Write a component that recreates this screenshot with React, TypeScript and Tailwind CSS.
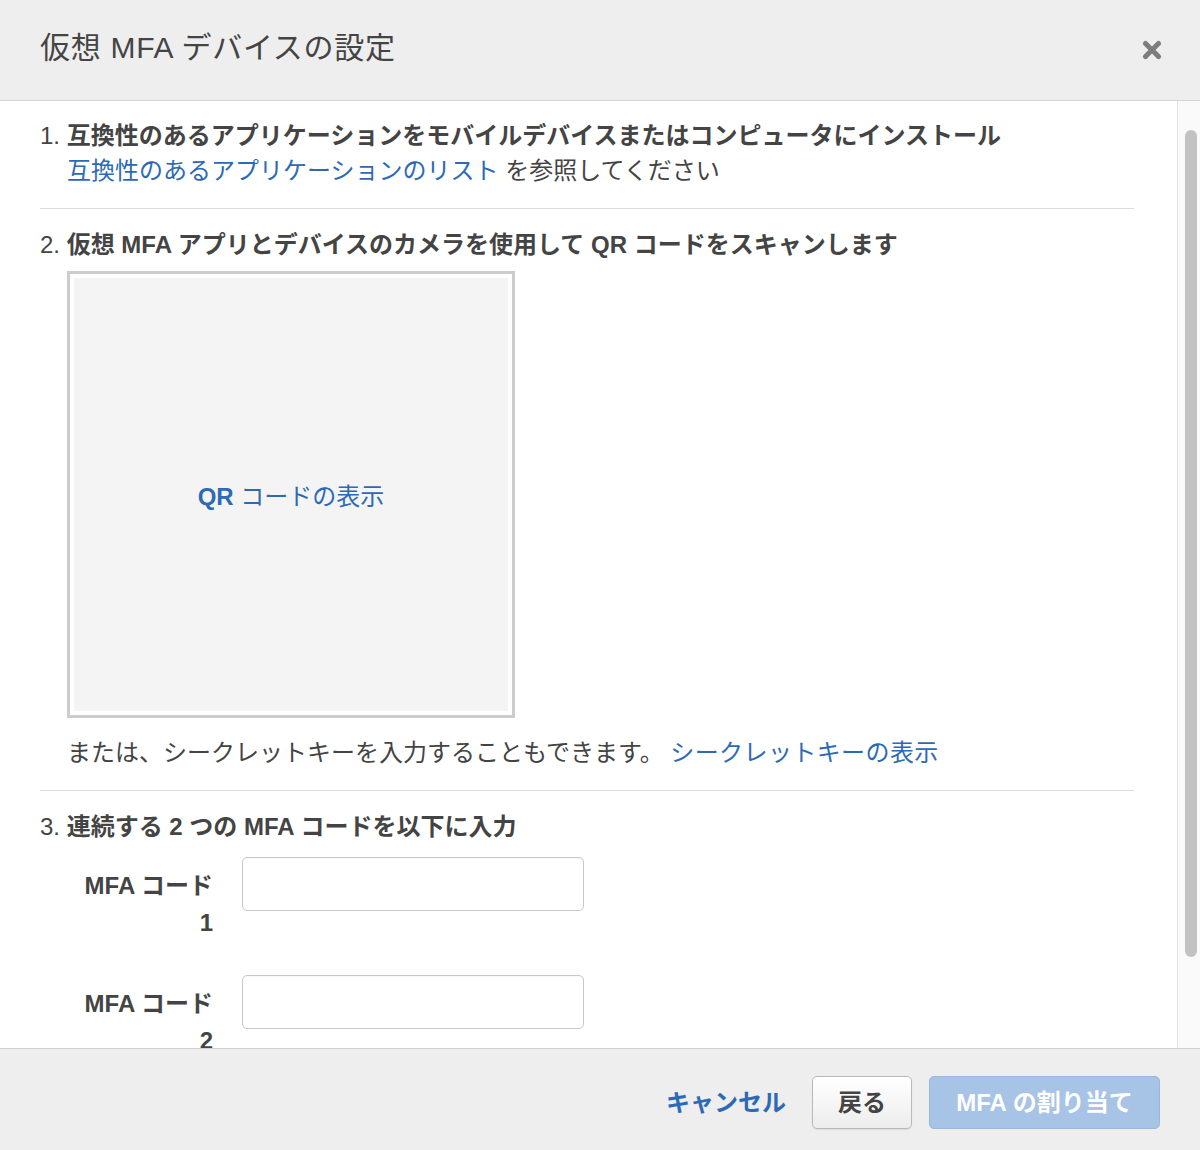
import React from "react";

const FONT = { fontFamily: '"Liberation Sans", "Noto Sans CJK JP", sans-serif' };

function CloseIcon() {
  return (
    <svg width="20" height="20" viewBox="0 0 20 20" aria-hidden="true">
      <path d="M3.5 3.5 L16.5 16.5 M16.5 3.5 L3.5 16.5" stroke="#7d7d7d" strokeWidth="5" strokeLinecap="round" />
    </svg>
  );
}

function CodeRow({ n, className }: { n: string; className?: string }) {
  return (
    <div className={"flex items-start " + (className ?? "")}>
      <div className="w-[173px] pt-[10px] text-right text-[24px] leading-[37px] font-bold text-[#444]">
        MFA コード
        <br />
        {n}
      </div>
      <div className="ml-[29px] w-[342px] h-[54px] rounded-[5px] border border-[#c8c8c8] bg-white shadow-[inset_0_1px_2px_rgba(0,0,0,0.04)]" />
    </div>
  );
}

export default function App() {
  return (
    <div style={FONT} className="w-[1200px] h-[1150px] flex flex-col bg-white overflow-hidden">
      {/* Header */}
      <div className="h-[101px] shrink-0 bg-[#eeeeee] border-b border-[#d4d4d4] flex items-center justify-between pl-[40px] pr-[38px] pb-[4px]">
        <div className="text-[30px] leading-[40px] tracking-[0.7px] text-[#444]">仮想 MFA デバイスの設定</div>
        <div className="pt-[4px]">
          <CloseIcon />
        </div>
      </div>

      {/* Body */}
      <div className="h-[947px] shrink-0 flex">
        <div className="flex-1 overflow-hidden pl-[40px] pr-[43px] pt-[17px] text-[#444]">
          <div className="text-[24px] leading-[35px]">
            <div>
              <span>1. </span>
              <span className="font-bold">互換性のあるアプリケーションをモバイルデバイスまたはコンピュータにインストール</span>
            </div>
            <div className="pl-[27px]">
              <span className="text-[#2d6ab5]">互換性のあるアプリケーションのリスト</span>
              <span> を参照してください</span>
            </div>
          </div>

          <div className="mt-[20px] border-t border-[#dddddd]" />

          <div className="mt-[18px] text-[24px] leading-[35px]">
            <span>2. </span>
            <span className="font-bold">仮想 MFA アプリとデバイスのカメラを使用して QR コードをスキャンします</span>
          </div>

          <div className="ml-[27px] mt-[9px] w-[448px] h-[447px] border-[3px] border-[#cccccc] bg-white p-[4px]">
            <div className="w-full h-full bg-[#f4f4f4] flex items-center justify-center pt-[3px]">
              <span className="text-[24px] leading-[35px] text-[#2d6ab5]">
                <span className="font-semibold">QR</span> コードの表示
              </span>
            </div>
          </div>

          <div className="ml-[27px] mt-[17px] text-[24px] leading-[35px]">
            <span>または、シークレットキーを入力することもできます。 </span>
            <span className="text-[#2d6ab5] tracking-[0.4px]">シークレットキーの表示</span>
          </div>

          <div className="mt-[20px] border-t border-[#dddddd]" />

          <div className="mt-[18px] text-[24px] leading-[35px]">
            <span>3. </span>
            <span className="font-bold">連続する 2 つの MFA コードを以下に入力</span>
          </div>

          <CodeRow n="1" className="mt-[13px]" />
          <CodeRow n="2" className="mt-[34px]" />
        </div>

        {/* Scrollbar */}
        <div className="w-[23px] shrink-0 border-l border-[#e4e4e4] bg-[#fafafa]">
          <div className="mt-[29px] ml-[7px] w-[12px] h-[827px] rounded-full bg-[#c2c2c2]" />
        </div>
      </div>

      {/* Footer */}
      <div className="h-[102px] shrink-0 bg-[#eeeeee] border-t border-[#d0d0d0] flex justify-end items-start pt-[27px] pr-[40px]">
        <div className="h-[53px] flex items-center text-[24px] font-bold text-[#2d6ab5]">キャンセル</div>
        <div className="ml-[26px] w-[100px] h-[53px] rounded-[5px] border border-[#b9b9b9] bg-gradient-to-b from-white to-[#ededed] shadow-[0_1px_1px_rgba(0,0,0,0.08)] flex items-center justify-center text-[24px] font-bold text-[#444]">
          戻る
        </div>
        <div className="ml-[17px] w-[231px] h-[53px] rounded-[5px] border border-[#98b7de] bg-[#a7c3e6] flex items-center justify-center text-[24px] font-bold text-white">
          MFA の割り当て
        </div>
      </div>
    </div>
  );
}
